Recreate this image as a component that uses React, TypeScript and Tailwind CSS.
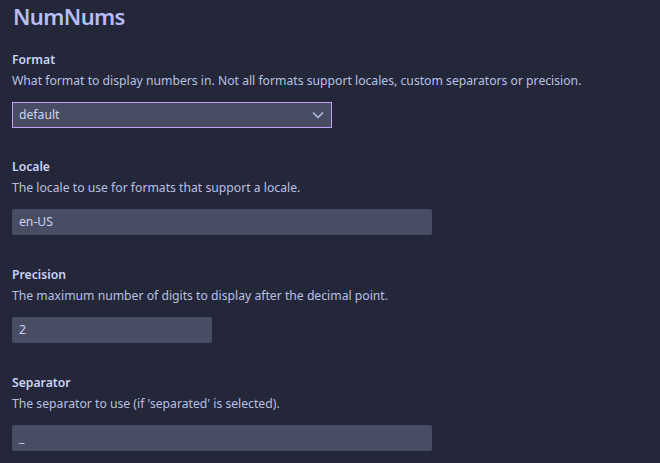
type Field = {
  label: string;
  desc: string;
  value: string;
  width: string;
  select?: boolean;
};

const fields: Field[] = [
  {
    label: "Format",
    desc: "What format to display numbers in. Not all formats support locales, custom separators or precision.",
    value: "default",
    width: "w-[320px]",
    select: true,
  },
  {
    label: "Locale",
    desc: "The locale to use for formats that support a locale.",
    value: "en-US",
    width: "w-[420px]",
  },
  {
    label: "Precision",
    desc: "The maximum number of digits to display after the decimal point.",
    value: "2",
    width: "w-[200px]",
  },
  {
    label: "Separator",
    desc: "The separator to use (if 'separated' is selected).",
    value: "_",
    width: "w-[420px]",
  },
];

export default function App() {
  return (
    <div className="w-[660px] h-[463px] overflow-hidden bg-[#24273a] px-3 font-['Noto_Sans',sans-serif]">
      <h1 className="pt-[1px] pl-[1px] text-[22px] leading-[30px] font-semibold tracking-[-0.6px] text-[#b7bdf8]">
        NumNums
      </h1>

      <div className="mt-[20px] flex flex-col gap-[31px]">
        {fields.map((f) => (
          <div key={f.label} className={`flex flex-col ${f.select ? "-mb-px" : ""}`}>
            <div className="text-[12.2px] leading-[18px] font-semibold text-[#cad3f5]">
              {f.label}
            </div>
            <div className="mt-[3px] text-[12.2px] leading-[18px] text-[#b8c0e0]">
              {f.desc}
            </div>
            {f.select ? (
              <div
                className={`mt-[12px] ${f.width} h-[26px] flex items-center justify-between border border-[#c6a0f6] bg-[#494d64] pl-[6px] pr-[7px] text-[12.2px] text-[#cad3f5]`}
              >
                <span>{f.value}</span>
                <svg width="12" height="8" viewBox="0 0 12 8" fill="none">
                  <path d="M1 1.5 L6 6.5 L11 1.5" stroke="#b7c9f0" strokeWidth="1.3" />
                </svg>
              </div>
            ) : (
              <div
                className={`mt-[12px] ${f.width} h-[26px] flex items-center rounded-[2px] bg-[#494d64] px-[7px] text-[12.2px] text-[#cad3f5]`}
              >
                {f.value}
              </div>
            )}
          </div>
        ))}
      </div>
    </div>
  );
}
